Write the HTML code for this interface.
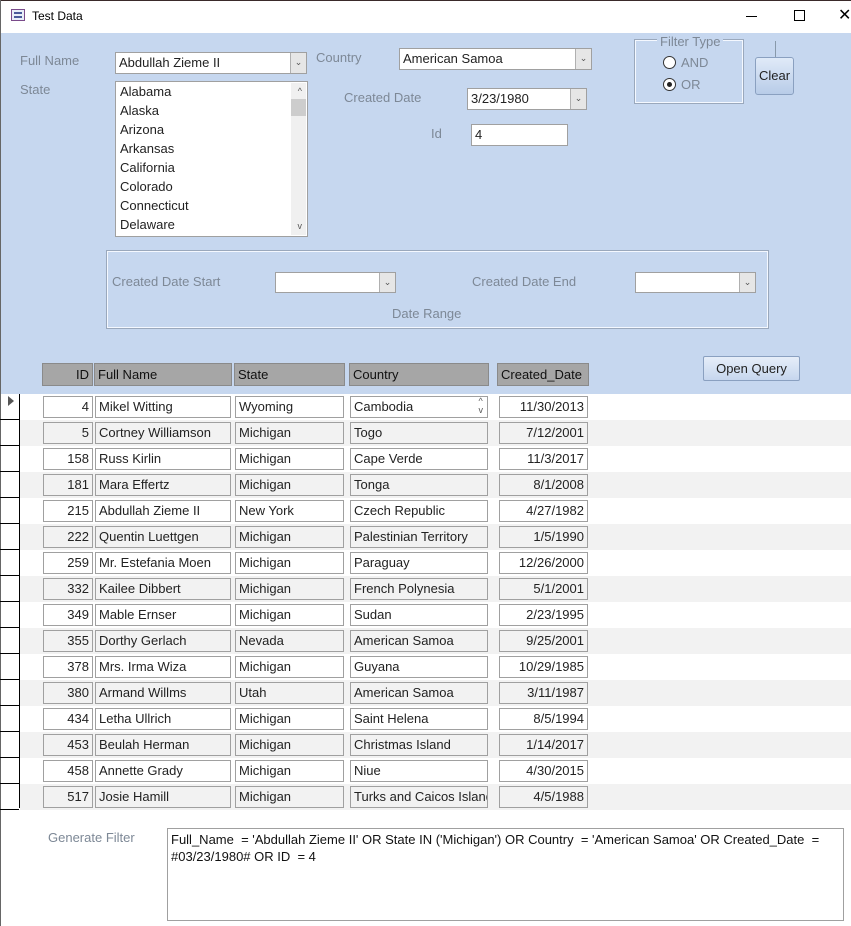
<!DOCTYPE html>
<html><head><meta charset="utf-8"><style>
*{margin:0;padding:0;box-sizing:border-box}
body{width:851px;height:926px;position:relative;overflow:hidden;background:#fff;font-family:"Liberation Sans","DejaVu Sans",sans-serif;font-size:13px;color:#222}
.a{position:absolute}
.lbl{position:absolute;color:#7d8896;font-size:13px}
.box{position:absolute;background:#fff;border:1px solid #a0a0a0;padding:1px 3px;white-space:nowrap;overflow:hidden;font-size:13px;line-height:18px}
.dd{position:absolute;right:0;top:0;bottom:0;width:16px;background:#e6e6e6;border-left:1px solid #b0b0b0;font-size:9px;color:#555;text-align:center;line-height:18px}
.hd{position:absolute;top:363px;height:23px;background:#a6a6a6;border:1px solid #8a8a8a;padding:2px 3px;font-size:13px;color:#111;line-height:17px}
.row{position:absolute;left:20px;width:831px;height:26px}
.c{position:absolute;top:2px;height:22px;border:1px solid #a0a0a0;padding:1px 3px;line-height:18px;white-space:nowrap;overflow:hidden;font-size:13px}
.sel{position:absolute;left:0;width:19px;border-bottom:1px solid #000}
</style></head><body>
<div class="a" style="left:0;top:0;width:851px;height:1px;background:#3a2a2a"></div>
<div class="a" style="left:0;top:0;width:1px;height:926px;background:#666"></div>
<div class="a" style="left:11px;top:9px;width:14px;height:12px;border:1px solid #7a4a8a;background:#e8eef8"></div>
<div class="a" style="left:14px;top:12px;width:8px;height:2px;background:#4a5a9a"></div>
<div class="a" style="left:14px;top:16px;width:8px;height:2px;background:#4a5a9a"></div>
<div class="a" style="left:32px;top:9px;font-size:12px;color:#000">Test Data</div>
<div class="a" style="left:746px;top:16px;width:11px;height:1px;background:#000"></div>
<div class="a" style="left:794px;top:10px;width:11px;height:11px;border:1px solid #000"></div>
<div class="a" style="left:838px;top:5px;font-size:16px;color:#000">✕</div>

<div class="a" style="left:1px;top:33px;width:850px;height:361px;background:#c6d7ef"></div>
<div class="lbl" style="left:20px;top:53px">Full Name</div>
<div class="lbl" style="left:20px;top:82px">State</div>
<div class="box" style="left:115px;top:52px;width:192px;height:22px">Abdullah Zieme II<div class="dd">⌄</div></div>
<div class="box" style="left:115px;top:81px;width:193px;height:156px;padding:0 4px;line-height:19px">Alabama<br>Alaska<br>Arizona<br>Arkansas<br>California<br>Colorado<br>Connecticut<br>Delaware
<div class="a" style="right:1px;top:1px;width:15px;bottom:1px;background:#f0f0f0"></div>
<div class="a" style="right:1px;top:17px;width:15px;height:17px;background:#cdcdcd"></div>
<div class="a" style="right:5px;top:0;font-size:9px;color:#555">^</div>
<div class="a" style="right:5px;bottom:0;font-size:9px;color:#555">v</div></div>
<div class="lbl" style="left:316px;top:50px">Country</div>
<div class="box" style="left:399px;top:48px;width:193px;height:22px">American Samoa<div class="dd">⌄</div></div>
<div class="lbl" style="left:344px;top:90px">Created Date</div>
<div class="box" style="left:467px;top:88px;width:120px;height:22px">3/23/1980<div class="dd">⌄</div></div>
<div class="lbl" style="left:431px;top:126px">Id</div>
<div class="box" style="left:471px;top:124px;width:97px;height:22px">4</div>

<div class="a" style="left:635px;top:40px;width:108px;height:63px;border:1px solid #f4f8ff;outline:1px solid #9aa8bc"></div>
<div class="lbl" style="left:657px;top:34px;background:#c6d7ef;padding:0 3px">Filter Type</div>
<div class="a" style="left:663px;top:56px;width:13px;height:13px;border:1px solid #333;border-radius:50%;background:#fff"></div>
<div class="lbl" style="left:681px;top:55px">AND</div>
<div class="a" style="left:663px;top:78px;width:13px;height:13px;border:1px solid #333;border-radius:50%;background:#fff"></div>
<div class="a" style="left:667px;top:82px;width:5px;height:5px;border-radius:50%;background:#222"></div>
<div class="lbl" style="left:681px;top:77px">OR</div>
<div class="a" style="left:775px;top:41px;width:1px;height:16px;background:#8899aa"></div>
<div class="a" style="left:755px;top:57px;width:39px;height:38px;border:1px solid #8aa0c0;border-radius:3px;background:linear-gradient(#e0eaf8,#b8cce8);text-align:center;line-height:36px;color:#222">Clear</div>

<div class="a" style="left:107px;top:251px;width:661px;height:77px;border:1px solid #f4f8ff;outline:1px solid #9aa8bc"></div>
<div class="lbl" style="left:112px;top:274px">Created Date Start</div>
<div class="box" style="left:275px;top:272px;width:121px;height:21px"><div class="dd">⌄</div></div>
<div class="lbl" style="left:472px;top:274px">Created Date End</div>
<div class="box" style="left:635px;top:272px;width:121px;height:21px"><div class="dd">⌄</div></div>
<div class="lbl" style="left:392px;top:306px">Date Range</div>

<div class="hd" style="left:42px;width:51px;text-align:right">ID</div>
<div class="hd" style="left:94px;width:138px">Full Name</div>
<div class="hd" style="left:234px;width:111px">State</div>
<div class="hd" style="left:349px;width:140px">Country</div>
<div class="hd" style="left:497px;width:92px">Created_Date</div>
<div class="a" style="left:703px;top:356px;width:97px;height:25px;border:1px solid #8aa0c0;border-radius:2px;background:linear-gradient(#e6eef9,#c6d6ee);text-align:center;line-height:23px">Open Query</div>

<div class="a" style="left:19px;top:394px;width:1px;height:414px;background:#000"></div>
<div class="a" style="left:8px;top:396px;width:0;height:0;border-left:6px solid #555;border-top:5px solid transparent;border-bottom:5px solid transparent"></div>
<div id="rows"></div>
<script>
var d=[[4,"Mikel Witting","Wyoming","Cambodia","11/30/2013"],[5,"Cortney Williamson","Michigan","Togo","7/12/2001"],[158,"Russ Kirlin","Michigan","Cape Verde","11/3/2017"],[181,"Mara Effertz","Michigan","Tonga","8/1/2008"],[215,"Abdullah Zieme II","New York","Czech Republic","4/27/1982"],[222,"Quentin Luettgen","Michigan","Palestinian Territory","1/5/1990"],[259,"Mr. Estefania Moen","Michigan","Paraguay","12/26/2000"],[332,"Kailee Dibbert","Michigan","French Polynesia","5/1/2001"],[349,"Mable Ernser","Michigan","Sudan","2/23/1995"],[355,"Dorthy Gerlach","Nevada","American Samoa","9/25/2001"],[378,"Mrs. Irma Wiza","Michigan","Guyana","10/29/1985"],[380,"Armand Willms","Utah","American Samoa","3/11/1987"],[434,"Letha Ullrich","Michigan","Saint Helena","8/5/1994"],[453,"Beulah Herman","Michigan","Christmas Island","1/14/2017"],[458,"Annette Grady","Michigan","Niue","4/30/2015"],[517,"Josie Hamill","Michigan","Turks and Caicos Islands","4/5/1988"]];
var h="";
d.forEach(function(r,i){var y=394+i*26,bg=i%2?"#f2f2f2":"#fff";
h+='<div class="sel" style="top:'+y+'px;height:26px"></div>';
h+='<div class="row" style="top:'+y+'px;background:'+bg+'">';
h+='<div class="c" style="left:23px;width:50px;text-align:right;background:'+bg+'">'+r[0]+'</div>';
h+='<div class="c" style="left:75px;width:136px;background:'+bg+'">'+r[1]+'</div>';
h+='<div class="c" style="left:215px;width:109px;background:'+bg+'">'+r[2]+'</div>';
h+='<div class="c" style="left:330px;width:138px;background:'+bg+'">'+r[3]+(i==0?'<span style="position:absolute;right:4px;top:0;font-size:9px;line-height:9px;color:#555">^<br>v</span>':'')+'</div>';
h+='<div class="c" style="left:479px;width:89px;text-align:right;background:'+bg+'">'+r[4]+'</div></div>';});
document.getElementById("rows").innerHTML=h;
</script>
<div class="lbl" style="left:48px;top:830px">Generate Filter</div>
<div class="box" style="left:167px;top:828px;width:677px;height:93px;white-space:normal;padding:2px 3px;line-height:17px;color:#111">Full_Name &nbsp;= 'Abdullah Zieme II' OR State IN ('Michigan') OR Country &nbsp;= 'American Samoa' OR Created_Date &nbsp;= #03/23/1980# OR ID &nbsp;= 4</div>
</body></html>
